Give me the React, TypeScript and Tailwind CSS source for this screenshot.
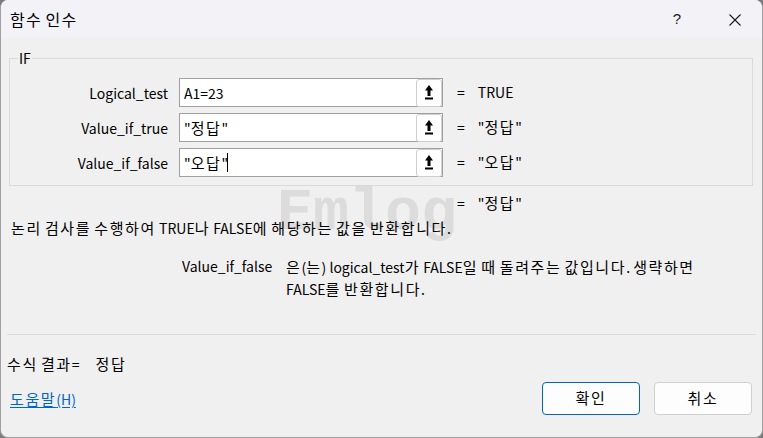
import React from "react";

const F = { fontFamily: '"Noto Sans CJK KR", "Noto Sans", sans-serif' };

function T({ s, big }: { s: string; big?: boolean }) {
  const parts = s.split(/([\uAC00-\uD7A3]+)/);
  return (
    <>
      {parts.map((p, i) =>
        /[\uAC00-\uD7A3]/.test(p) ? (
          <span key={i} className={big ? "text-[16px] tracking-[1.3px]" : "text-[15px] tracking-[1.6px]"}>
            {p}
          </span>
        ) : (
          <React.Fragment key={i}>{p}</React.Fragment>
        )
      )}
    </>
  );
}

function RefButton() {
  return (
    <div className="w-[26px] h-[28px] my-[-0.5px] rounded-[3px] border border-[#cfcfcf] bg-white flex items-center justify-center">
      <svg width="8" height="15" viewBox="0 0 8 15">
        <polygon points="4,0 8,5.5 0,5.5" fill="#000" />
        <rect x="2.5" y="5" width="3" height="6" fill="#000" />
        <rect x="0" y="12.5" width="8" height="2" fill="#000" />
      </svg>
    </div>
  );
}

function ArgRow({ label, value, result, caret }: { label: string; value: string; result: string; caret?: boolean }) {
  return (
    <div className="flex items-center h-[29px]">
      <div className="w-[158px] text-right text-[14px] text-black leading-[20px]">{label}</div>
      <div className="ml-[11px] w-[264px] h-[29px] border border-[#a0a0a0] bg-white flex items-center justify-between pl-[4px] pr-0">
        <span className="text-[14px] leading-[20px] text-black flex items-center">
          <T s={value} />
          {caret && <span className="inline-block w-px h-[19px] bg-black ml-[-1px]" />}
        </span>
        <RefButton />
      </div>
      <span className="ml-[14px] text-[14px] text-black">=</span>
      <span className="ml-[13px] text-[14px] text-black">
        <T s={result} />
      </span>
    </div>
  );
}

export default function App() {
  return (
    <div className="w-[763px] h-[438px] bg-[#7c7c7c] overflow-hidden" style={F}>
      <div className="w-[763px] h-[438px] rounded-[8px] border-l border-r border-b border-[#a0a0a0] bg-[#f0f0f0] overflow-hidden relative">
        {/* title bar */}
        <div className="h-[38px] bg-[#f3f2f7] flex items-center justify-between pl-[9px]">
          <span className="text-[15px] text-black leading-[20px] mt-[1px]">
            <T s="함수 인수" big />
          </span>
          <div className="flex items-center h-full">
            <span className="text-[15px] text-[#222] mr-[48px] mt-[1px]" style={{ fontFamily: '"Liberation Sans", sans-serif' }}>?</span>
            <svg width="12" height="12" viewBox="0 0 12 12" className="mr-[21px] mt-[1px]">
              <path d="M0.5 0.5 L11.5 11.5 M11.5 0.5 L0.5 11.5" stroke="#1a1a1a" strokeWidth="1.1" />
            </svg>
          </div>
        </div>

        {/* group box */}
        <div className="relative ml-[8px] mt-[20px] w-[744px] h-[128px] border border-[#dadada]">
          <span className="absolute left-[8px] top-[-11px] px-[1px] bg-[#f0f0f0] text-[14px] leading-[20px] text-black">IF</span>
          <div className="pt-[19px] flex flex-col gap-[6px]">
            <ArgRow label="Logical_test" value="A1=23" result="TRUE" />
            <ArgRow label="Value_if_true" value={'"정답"'} result={'"정답"'} />
            <ArgRow label="Value_if_false" value={'"오답"'} result={'"오답"'} caret />
          </div>
        </div>

        {/* watermark */}
        <div
          className="absolute left-[276px] top-[183px] text-[60px] leading-[60px] font-bold text-[#dcdcdc] pointer-events-none"
          style={{ fontFamily: '"Liberation Mono", monospace' }}
        >
          Emlog
        </div>

        {/* formula result */}
        <div className="relative mt-[7px] h-[20px] flex items-center text-[14px] text-black pl-[456px]">
          <span>=</span>
          <span className="ml-[13px]">
            <T s={'"정답"'} />
          </span>
        </div>

        <div className="relative mt-[5px] h-[20px] pl-[10px] text-[14px] leading-[20px] text-black whitespace-nowrap">
          <T s="논리 검사를 수행하여 TRUE나 FALSE에 해당하는 값을 반환합니다." />
        </div>

        <div className="relative mt-[18px] flex text-[14px] leading-[21px] text-black">
          <div className="w-[181px]" />
          <div className="w-[104px]">Value_if_false</div>
          <div className="w-[460px]">
            <div className="whitespace-nowrap">
              <T s="은(는) logical_test가 FALSE일 때 돌려주는 값입니다. 생략하면" />
            </div>
            <div className="whitespace-nowrap">
              <T s="FALSE를 반환합니다." />
            </div>
          </div>
        </div>

        <div className="mt-[34px] mx-[6px] h-px bg-[#dcdcdc]" />

        <div className="mt-[19px] h-[20px] pl-[6px] flex items-center text-[14px] text-black">
          <span>
            <T s="수식 결과=" />
          </span>
          <span className="ml-[16px]">
            <T s="정답" />
          </span>
        </div>

        <div className="mt-[8px] flex items-center pl-[9px] pr-[10px]">
          <a className="text-[14px] text-[#0066cc] underline underline-offset-2 mt-[1px]">
            <T s="도움말(H)" />
          </a>
          <div className="ml-auto flex gap-[14px]">
            <button className="w-[98px] h-[33px] rounded-[4px] border border-[#0067c0] bg-[#fdfdfd] text-[14px] text-black">
              <T s="확인" />
            </button>
            <button className="w-[98px] h-[33px] rounded-[4px] border border-[#d0d0d0] bg-[#fdfdfd] text-[14px] text-black">
              <T s="취소" />
            </button>
          </div>
        </div>
      </div>
    </div>
  );
}
